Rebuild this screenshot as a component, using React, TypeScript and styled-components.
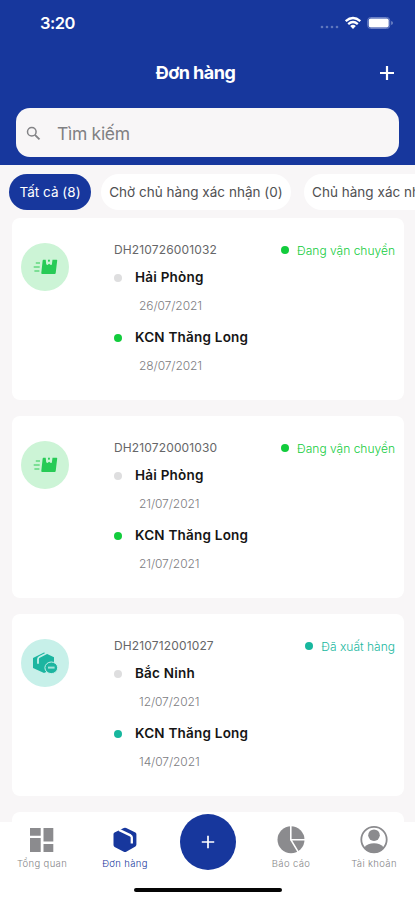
import React from 'react';
import styled, { createGlobalStyle } from 'styled-components';

const GlobalStyle = createGlobalStyle`
  * { box-sizing: border-box; }
  body { margin: 0; background: #f8f6f7; font-family: Inter, "Liberation Sans", sans-serif; }
`;

const NAVY = '#17379d';
const GREEN = '#12cc3c';
const TEAL = '#17b79e';

const Screen = styled.div`
  width: 415px;
  height: 900px;
  display: flex;
  flex-direction: column;
  overflow: hidden;
  background: #f8f6f7;
`;

const Header = styled.header`
  height: 165px;
  flex: none;
  display: flex;
  flex-direction: column;
  background: ${NAVY};
  color: #fff;
`;

const StatusBar = styled.div`
  height: 46px;
  display: flex;
  align-items: center;
  justify-content: space-between;
  padding: 0 21px 0 40px;
`;

const Clock = styled.span`
  font-size: 16.5px;
  font-weight: 600;
  letter-spacing: -0.5px;
`;

const StatusIcons = styled.div`
  display: flex;
  align-items: center;
  svg { display: block; }
`;

const TitleBar = styled.div`
  height: 62px;
  display: grid;
  grid-template-columns: 38px 1fr 62px;
  align-items: center;
  padding: 0 0 8px;
`;

const Title = styled.h1`
  grid-column: 2;
  margin: 0;
  text-align: center;
  font-size: 18px;
  line-height: 24px;
  font-weight: 700;
  letter-spacing: -0.5px;
`;

const AddButton = styled.button`
  border: 0;
  padding: 0;
  margin-left: 25px;
  background: none;
  color: #fff;
  width: 18px;
  height: 18px;
  svg { display: block; }
`;

const SearchBox = styled.div`
  height: 49px;
  margin: 0 16px;
  border-radius: 14px;
  background: #f8f6f7;
  display: flex;
  align-items: center;
  padding: 1px 10px 0;
  gap: 16px;
  color: #808083;
  font-size: 17.5px;
  letter-spacing: -0.3px;
`;

const Chips = styled.div`
  flex: none;
  height: 53px;
  padding: 9px 0 0 9px;
  display: flex;
  align-items: flex-start;
`;

const Chip = styled.button<{ $active?: boolean; $width: number; $gap: number }>`
  flex: none;
  width: ${p => p.$width}px;
  height: 36px;
  margin-right: ${p => p.$gap}px;
  padding: 0;
  border: 0;
  border-radius: 18px;
  background: ${p => (p.$active ? NAVY : '#fff')};
  color: ${p => (p.$active ? '#fff' : '#505052')};
  font: 400 13.5px Inter, sans-serif;
  letter-spacing: 0.03px;
  white-space: nowrap;
`;

const OrderList = styled.main`
  flex: 1;
  min-height: 0;
  overflow: hidden;
  display: flex;
  flex-direction: column;
  gap: 16px;
  padding: 0 11px 0 12px;
`;

const Card = styled.article`
  flex: none;
  height: 182px;
  border-radius: 8px;
  background: #fff;
  display: grid;
  grid-template-columns: 93px 1fr;
  padding: 18px 9px 0;
`;

const IconDisc = styled.div<{ $bg: string }>`
  width: 48px;
  height: 48px;
  margin-top: 7px;
  border-radius: 50%;
  background: ${p => p.$bg};
  svg { display: block; }
`;

const Row = styled.div`
  display: flex;
  align-items: center;
  height: 28px;
`;

const OrderId = styled.span`
  font-size: 12px;
  line-height: 14px;
  padding-bottom: 1px;
  letter-spacing: 0.14px;
  color: #666668;
`;

const Status = styled.span<{ $color: string }>`
  margin-left: auto;
  display: flex;
  align-items: center;
  gap: 8px;
  color: ${p => p.$color};
  font-size: 12px;
  font-weight: 300;
  letter-spacing: 0.01px;
`;

const Dot = styled.i<{ $color: string }>`
  width: 8px;
  height: 8px;
  border-radius: 50%;
  background: ${p => p.$color};
`;

const Place = styled(Row)`
  gap: 13px;
  font-size: 13.5px;
  font-weight: 600;
  letter-spacing: 0.22px;
  color: #151515;
`;

const PlaceName = styled.span`
  line-height: 18px;
  padding-bottom: 2px;
`;

const DateText = styled(Row)`
  padding: 0 0 2px 25px;
  font-size: 12px;
  font-weight: 300;
  letter-spacing: -0.08px;
  color: #7c7c7f;
  margin-bottom: 4px;
`;

const TabBar = styled.nav`
  flex: none;
  height: 78px;
  background: #fff;
  display: flex;
  flex-direction: column;
  align-items: center;
`;

const Tabs = styled.div`
  width: 100%;
  height: 66px;
  display: grid;
  grid-template-columns: repeat(5, 83px);
`;

const Tab = styled.div<{ $active?: boolean }>`
  display: flex;
  flex-direction: column;
  align-items: center;
  padding: 3px 0 0 1px;
  gap: 2px;
  font-size: 9.5px;
  line-height: 14px;
  font-weight: 300;
  letter-spacing: 0.35px;
  color: ${p => (p.$active ? NAVY : '#858588')};
  svg { display: block; }
`;

const CreateButton = styled.button`
  width: 56px;
  height: 56px;
  margin: -8px auto 0;
  padding: 0;
  border: 0;
  border-radius: 50%;
  background: ${NAVY};
  display: grid;
  place-items: center;
  z-index: 1;
`;

const HomeIndicator = styled.div`
  width: 148px;
  height: 4px;
  border-radius: 2px;
  background: #050505;
`;

const Plus = ({ size, stroke }: { size: number; stroke: number }) => (
  <svg width={size} height={size} viewBox="0 0 18 18" fill="none" stroke="#fff" strokeWidth={stroke}>
    <path d="M9 2v14M2 9h14" />
  </svg>
);

const StatusGlyphs = () => (
  <svg width="76" height="18" viewBox="0 0 76 18" fill="none">
    <g fill="#6077bd">
      <circle cx="4" cy="13" r="1.3" /><circle cx="9" cy="13" r="1.3" />
      <circle cx="14" cy="13" r="1.3" /><circle cx="19" cy="13" r="1.3" />
    </g>
    <g stroke="#fff" strokeWidth="2.3">
      <path d="M27.7 7.2Q35 .9 42.3 7.2" />
      <path d="M30.2 10.1Q35 5.9 39.8 10.1" />
    </g>
    <path d="M32.2 12Q35 9.6 37.8 12L35 15Z" fill="#fff" />
    <rect x="49.7" y="3.5" width="22" height="11" rx="3" stroke="#6b80c4" />
    <rect x="50.7" y="4.5" width="20" height="9" rx="1.9" fill="#fff" />
    <path d="M73.3 7v4q1.5-.6 1.5-2t-1.5-2Z" fill="#8395cd" />
  </svg>
);

const SearchIcon = () => (
  <svg width="15" height="15" viewBox="0 0 15 15" fill="none" stroke="#838386" strokeWidth="1.5">
    <circle cx="5.8" cy="5.7" r="4.3" /><path d="m8.9 8.8 4.6 4.6" strokeWidth="1.9" />
  </svg>
);

const ShippingIcon = () => (
  <svg width="48" height="48" viewBox="0 0 48 48">
    <path d="M22.4 16.8h2.3l.5 4.3q.2 1 1.2.8l1.7-1.1 1.7 1.1q.9.3 1.1-.7l.6-4.4h4.1q.7 0 .6.8l-1.5 12.3q-.1 1-1 1H21.2q-1 0-.9-1l1.3-12q.1-1.1.8-1.1Z" fill="#27cb56" />
    <path d="M27 16.8h2l-.4 2-1.4 0Z" fill="#27cb56" />
    <path d="M14.8 20h4.2M12.7 24h6M13.4 28h5" stroke="#62d780" strokeWidth="1.4" />
  </svg>
);

const ExportedIcon = () => (
  <svg width="48" height="48" viewBox="0 0 48 48">
    <path d="M12 19v10l11 5 10-4.5V18.3l-10-4.8Z" fill="#1cb5a0" />
    <path d="M17 24.8v-4.6q0-1.5 1.4-2.2l8.2-4.2" fill="none" stroke="#c7f0e9" strokeWidth="1.8" />
    <ellipse cx="30.3" cy="28.8" rx="6.4" ry="5.8" fill="#1cb5a0" stroke="#c7f0e9" strokeWidth="1" />
    <path d="M27 28.6h6.6" stroke="#a5e3da" strokeWidth="2" />
  </svg>
);

const DashboardIcon = () => (
  <svg width="30" height="30" viewBox="0 0 30 30" fill="#8b8b8e">
    <path d="M3 3h10.7v7.7H3ZM16.5 3h9.8v13.4h-9.8ZM3 13h10.7v14H3ZM16.5 19h9.8v8h-9.8Z" />
  </svg>
);

const BoxIcon = () => (
  <svg width="30" height="30" viewBox="0 0 30 30">
    <path d="M13.8 3.1q1.2-.6 2.4 0l9.2 4.5q1 .5 1 1.7v10.3q0 1.2-1 1.8l-9.2 5.3q-1.2.6-2.4 0l-9.2-4.8q-1.1-.6-1.1-1.8V8.9q0-1 1-1.5Z" fill={NAVY} />
    <path d="m9 4.9 11.5 5.5q1.3.7 1.3 2v6" fill="none" stroke="#fff" strokeWidth="2.3" />
  </svg>
);

const PieIcon = () => (
  <svg width="30" height="30" viewBox="0 0 30 30">
    <circle cx="15" cy="14.7" r="13.5" fill="#8b8b8e" />
    <path d="M14.8 1v13.7H29M14.8 14.7l7.8 13" fill="none" stroke="#fff" strokeWidth="1.6" />
  </svg>
);

const AccountIcon = () => (
  <svg width="30" height="30" viewBox="0 0 30 30" fill="#8b8b8e">
    <circle cx="15" cy="14.6" r="12.7" fill="none" stroke="#8b8b8e" strokeWidth="1.8" />
    <circle cx="15" cy="10.2" r="5.8" />
    <path d="M5.2 22.4q3.6-4.2 9.8-4.2t9.8 4.2Q21 28 15 28T5.2 22.4Z" />
  </svg>
);

interface Order {
  id: string;
  kind: 'shipping' | 'exported';
  from: string;
  fromDate: string;
  toDate: string;
}

const orders: Order[] = [
  { id: 'DH210726001032', kind: 'shipping', from: 'Hải Phòng', fromDate: '26/07/2021', toDate: '28/07/2021' },
  { id: 'DH210720001030', kind: 'shipping', from: 'Hải Phòng', fromDate: '21/07/2021', toDate: '21/07/2021' },
  { id: 'DH210712001027', kind: 'exported', from: 'Bắc Ninh', fromDate: '12/07/2021', toDate: '14/07/2021' },
];

const OrderCard = ({ order }: { order: Order }) => {
  const shipping = order.kind === 'shipping';
  const color = shipping ? GREEN : TEAL;
  return (
    <Card>
      <IconDisc $bg={shipping ? '#ccf4d6' : '#c7f0e9'}>
        {shipping ? <ShippingIcon /> : <ExportedIcon />}
      </IconDisc>
      <div>
        <Row>
          <OrderId>{order.id}</OrderId>
          <Status $color={color}><Dot $color={color} />{shipping ? 'Đang vận chuyển' : 'Đã xuất hàng'}</Status>
        </Row>
        <Place><Dot $color="#dededf" /><PlaceName>{order.from}</PlaceName></Place>
        <DateText>{order.fromDate}</DateText>
        <Place><Dot $color={color} /><PlaceName>KCN Thăng Long</PlaceName></Place>
        <DateText>{order.toDate}</DateText>
      </div>
    </Card>
  );
};

export default function App() {
  return (
    <Screen>
      <GlobalStyle />
      <Header>
        <StatusBar>
          <Clock>3:20</Clock>
          <StatusIcons><StatusGlyphs /></StatusIcons>
        </StatusBar>
        <TitleBar>
          <Title>Đơn hàng</Title>
          <AddButton aria-label="+"><Plus size={18} stroke={2.2} /></AddButton>
        </TitleBar>
        <SearchBox><SearchIcon />Tìm kiếm</SearchBox>
      </Header>
      <Chips>
        <Chip $active $width={82} $gap={10}>Tất cả (8)</Chip>
        <Chip $width={190} $gap={13}>Chờ chủ hàng xác nhận (0)</Chip>
        <Chip $width={162} $gap={0}>Chủ hàng xác nhận (0)</Chip>
      </Chips>
      <OrderList>
        {orders.map(order => <OrderCard key={order.id} order={order} />)}
        <Card />
      </OrderList>
      <TabBar>
        <Tabs>
          <Tab><DashboardIcon />Tổng quan</Tab>
          <Tab $active><BoxIcon />Đơn hàng</Tab>
          <CreateButton aria-label="+"><Plus size={16} stroke={1.9} /></CreateButton>
          <Tab><PieIcon />Báo cáo</Tab>
          <Tab><AccountIcon />Tài khoản</Tab>
        </Tabs>
        <HomeIndicator />
      </TabBar>
    </Screen>
  );
}
